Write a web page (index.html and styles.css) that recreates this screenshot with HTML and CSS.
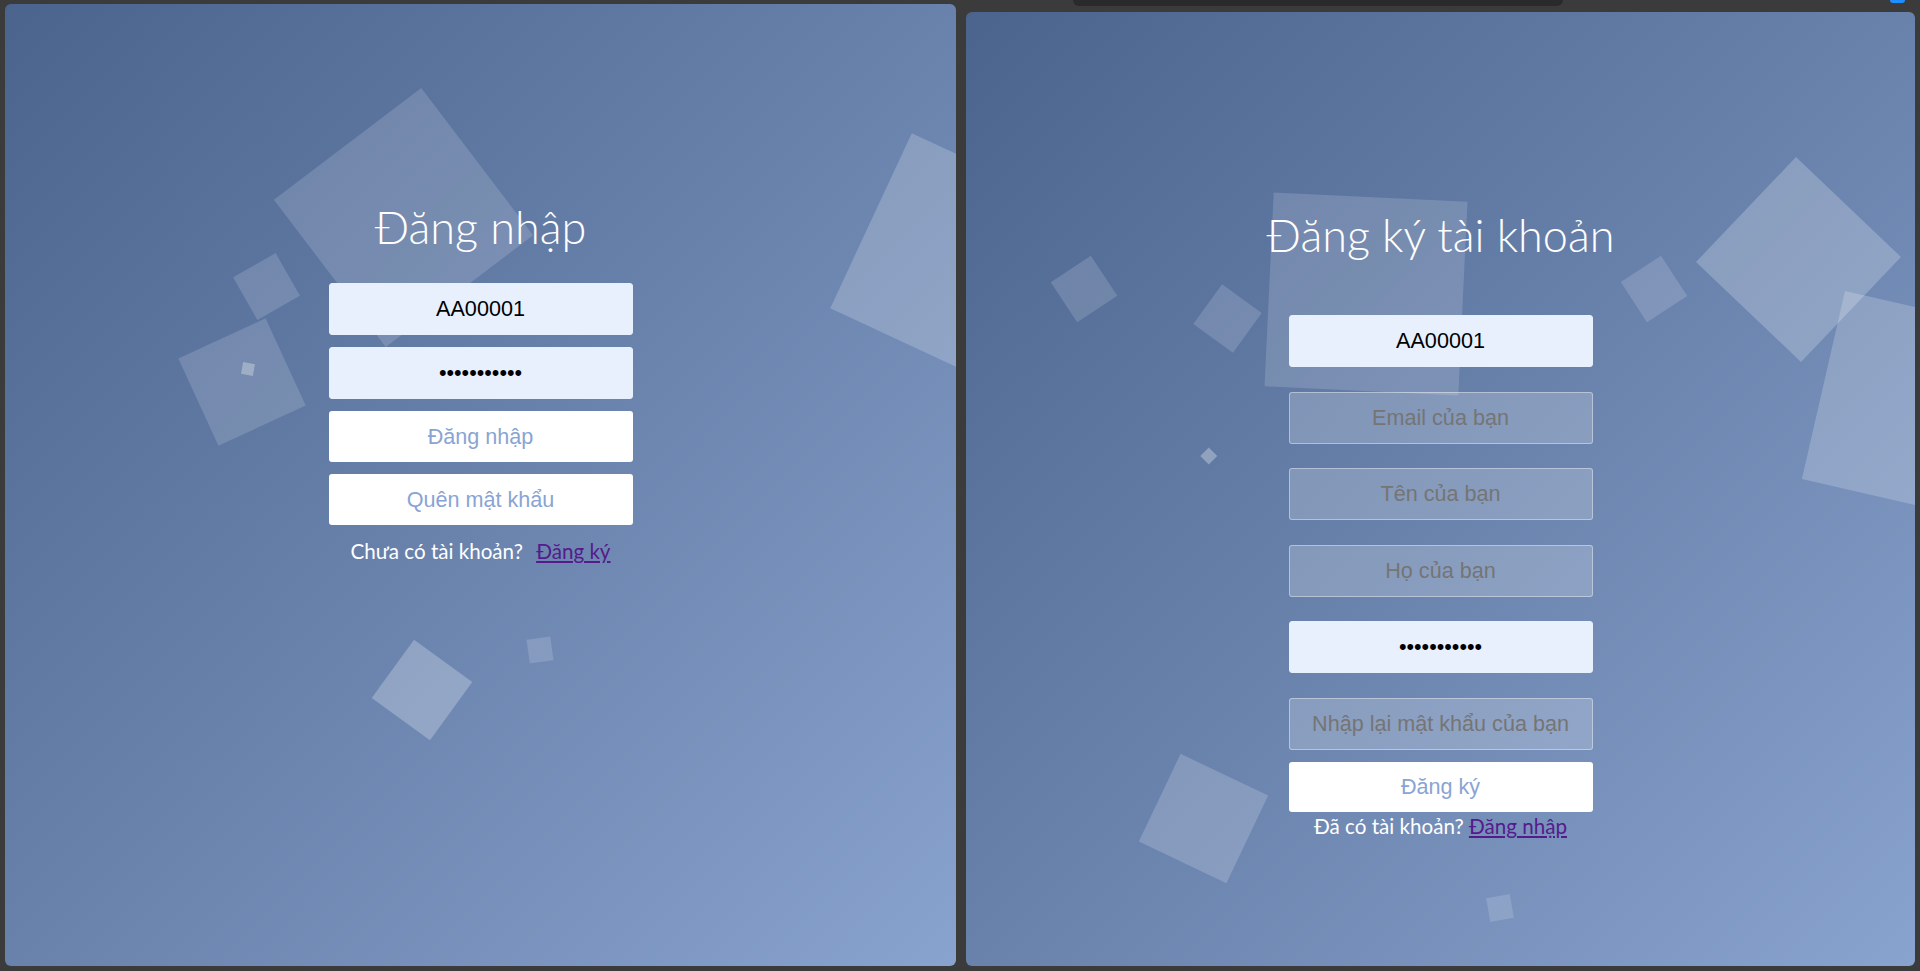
FILE: index.html
```html
<!DOCTYPE html>
<html lang="vi">
<head>
<meta charset="utf-8">
<title>Đăng nhập / Đăng ký</title>
<link rel="stylesheet" href="styles.css">
</head>
<body>
<div class="screen">
  <div class="topbar"></div>
  <div class="corner-badge"></div>

  <section class="panel panel-login">
    <ul class="bubbles">
      <li class="sq l1"></li>
      <li class="sq l2"></li>
      <li class="sq l3"></li>
      <li class="sq l4"></li>
      <li class="sq l5"></li>
      <li class="sq l6"></li>
      <li class="sq l7"></li>
    </ul>
    <div class="form-wrap">
      <h1 class="title">Đăng nhập</h1>
      <form class="form form-login">
        <input class="field filled" type="text" value="AA00001" readonly>
        <input class="field filled" type="password" value="12345678901" readonly>
        <button class="btn" type="button">Đăng nhập</button>
        <button class="btn btn-alt" type="button">Quên mật khẩu</button>
      </form>
      <p class="switch switch-login">Chưa có tài khoản? <a class="link" href="#">Đăng ký</a></p>
    </div>
  </section>

  <section class="panel panel-register">
    <ul class="bubbles">
      <li class="sq r1"></li>
      <li class="sq r2"></li>
      <li class="sq r3"></li>
      <li class="sq r4"></li>
      <li class="sq r5"></li>
      <li class="sq r6"></li>
      <li class="sq r7"></li>
      <li class="sq r8"></li>
      <li class="sq r9"></li>
    </ul>
    <div class="form-wrap">
      <h1 class="title">Đăng ký tài khoản</h1>
      <form class="form form-register">
        <div class="fields">
          <input class="field filled" type="text" value="AA00001" readonly>
          <input class="field" type="email" placeholder="Email của bạn">
          <input class="field" type="text" placeholder="Tên của bạn">
          <input class="field" type="text" placeholder="Họ của bạn">
          <input class="field filled" type="password" value="12345678901" readonly>
          <input class="field" type="password" placeholder="Nhập lại mật khẩu của bạn">
        </div>
        <button class="btn btn-register" type="button">Đăng ký</button>
      </form>
      <p class="switch switch-register">Đã có tài khoản? <a class="link" href="#">Đăng nhập</a></p>
    </div>
  </section>
</div>
</body>
</html>
```

FILE: styles.css
```css
* {
  box-sizing: border-box;
}

html,
body {
  margin: 0;
  padding: 0;
  height: 100%;
}

body {
  background: #3b3b3b;
  font-family: "Liberation Sans", Arial, sans-serif;
  overflow: hidden;
}

.screen {
  position: relative;
  height: 971px;
  display: flex;
  align-items: flex-end;
  gap: 10px;
  padding: 0 5px 5px 5px;
}

.topbar {
  position: absolute;
  left: 1073px;
  top: 0;
  width: 490px;
  height: 6px;
  background: #2a2a2a;
  border-radius: 0 0 10px 10px;
}

.corner-badge {
  position: absolute;
  left: 1890px;
  top: 0;
  width: 15px;
  height: 3px;
  background: #1f8fff;
  border-radius: 0 0 3px 3px;
}

.panel {
  position: relative;
  flex: none;
  overflow: hidden;
  border-radius: 6px;
  background: linear-gradient(to bottom right, #4a648e 0%, #6982ac 50%, #88a3ce 100%);
}

.panel-login {
  width: 951px;
  height: 962px;
}

.panel-register {
  width: 949px;
  height: 954px;
}

/* floating squares */
.bubbles {
  position: absolute;
  inset: 0;
  margin: 0;
  padding: 0;
  list-style: none;
}

.sq {
  position: absolute;
  display: block;
  background: rgba(255, 255, 255, 0.15);
}

.l1 { left: 305.5px; top: 120.5px; width: 185px; height: 185px; transform: rotate(52.8deg); }
.l2 { left: 236.5px; top: 257.5px; width: 49px; height: 49px; transform: rotate(60.3deg); }
.l3 { left: 189px; top: 330px; width: 96px; height: 96px; transform: rotate(65.3deg); }
.l4 { left: 237px; top: 359px; width: 12px; height: 12px; transform: rotate(10deg); background: rgba(255, 255, 255, 0.3); }
.l5 { left: 856.5px; top: 160.5px; width: 193px; height: 193px; transform: rotate(25deg); background: rgba(255, 255, 255, 0.2); }
.l6 { left: 380.5px; top: 649.5px; width: 72px; height: 72px; transform: rotate(36deg); background: rgba(255, 255, 255, 0.25); }
.l7 { left: 523px; top: 634px; width: 24px; height: 24px; transform: rotate(-8deg); }

.r1 { left: 303px; top: 184.5px; width: 194px; height: 194px; transform: rotate(2.7deg); }
.r2 { left: 93.5px; top: 252.5px; width: 48px; height: 48px; transform: rotate(56.6deg); }
.r3 { left: 237.2px; top: 281.5px; width: 49px; height: 49px; transform: rotate(36deg); }
.r4 { left: 237.25px; top: 438.25px; width: 11.5px; height: 11.5px; transform: rotate(45deg); background: rgba(255, 255, 255, 0.3); }
.r5 { left: 664px; top: 252.5px; width: 48px; height: 48px; transform: rotate(57deg); }
.r6 { left: 759.5px; top: 175px; width: 145px; height: 145px; transform: rotate(43.6deg); background: rgba(255, 255, 255, 0.22); }
.r7 { left: 855px; top: 298px; width: 193px; height: 193px; transform: rotate(12.9deg); background: rgba(255, 255, 255, 0.2); }
.r8 { left: 189px; top: 758px; width: 97px; height: 97px; transform: rotate(25.5deg); background: rgba(255, 255, 255, 0.18); }
.r9 { left: 522px; top: 884px; width: 24px; height: 24px; transform: rotate(-10deg); }

/* form */
.form-wrap {
  position: relative;
  z-index: 1;
  display: flex;
  flex-direction: column;
  align-items: center;
  padding-top: 195px;
}

.title {
  margin: 0;
  font-family: Lato, "Open Sans", sans-serif;
  font-weight: 300;
  font-size: 45px;
  line-height: 56px;
  color: #ffffff;
  white-space: nowrap;
}

.form {
  display: flex;
  flex-direction: column;
  align-items: center;
  margin: 0;
}

.form-login {
  gap: 12px;
  margin-top: 28px;
}

.form-register {
  margin-top: 52px;
}

.fields {
  display: flex;
  flex-direction: column;
  gap: 24.6px;
}

.field {
  display: block;
  width: 304px;
  height: 52px;
  margin: 0;
  padding: 0 10px;
  border: 1px solid rgba(255, 255, 255, 0.4);
  border-radius: 3px;
  background: rgba(255, 255, 255, 0.2);
  color: #000000;
  font-family: "Liberation Sans", Arial, sans-serif;
  font-size: 21.6px;
  text-align: center;
  outline: none;
}

.field::placeholder {
  color: #757575;
  opacity: 1;
}

.field.filled {
  background: #e8f0fe;
  border-color: #e8f0fe;
}

.btn {
  display: block;
  width: 304px;
  height: 51px;
  margin: 0;
  padding: 0;
  border: 0;
  border-radius: 3px;
  background: #ffffff;
  color: #89a4d4;
  font-family: "Liberation Sans", Arial, sans-serif;
  font-size: 21.6px;
  cursor: pointer;
}

.btn-register {
  height: 50px;
  margin-top: 12px;
}

.switch {
  margin: 0;
  font-family: Lato, "Open Sans", sans-serif;
  font-size: 20.6px;
  line-height: 24px;
  color: #ffffff;
  white-space: nowrap;
}

.switch-login {
  margin-top: 14px;
}

.switch-login .link {
  margin-left: 8px;
}

.switch-register {
  margin-top: 2px;
}

.link {
  color: #551a8b;
  text-decoration: underline;
}
```
